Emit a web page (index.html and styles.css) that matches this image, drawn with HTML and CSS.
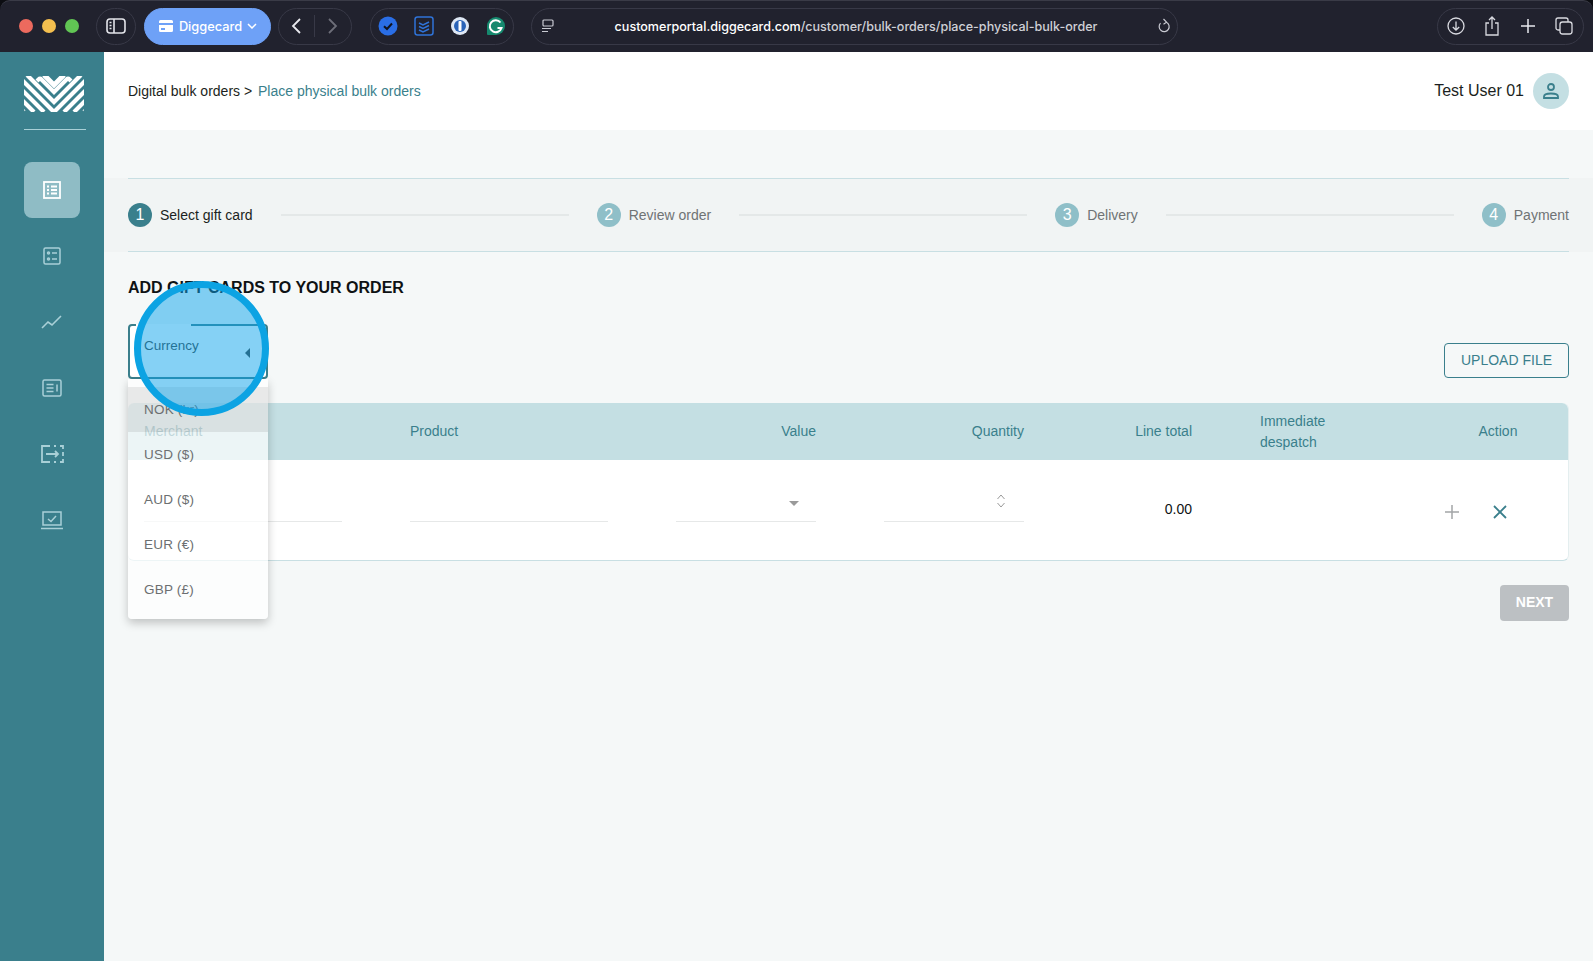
FILE: index.html
```html
<!DOCTYPE html>
<html lang="en">
<head>
    <meta charset="UTF-8">
    <title>Place physical bulk orders</title>
    <link rel="stylesheet" href="styles.css">
</head>
<body>
    <!-- Browser toolbar -->
    <div class="topbar">
        <div class="lights">
            <span class="light red"></span>
            <span class="light yellow"></span>
            <span class="light green"></span>
        </div>
        <div class="pill sidebar-btn">
            <svg width="22" height="18" viewBox="0 0 22 18" fill="none" stroke="#e4e5ea" stroke-width="1.6"><rect x="2" y="2" width="18" height="14" rx="3"/><path d="M9 2v14M4.5 5.5h2M4.5 8.5h2M4.5 11.5h2"/></svg>
        </div>
        <div class="pill tab-group">
            <svg width="16" height="14" viewBox="0 0 16 14" fill="#fff"><path d="M2.500 1h11A1.500 1.500 0 0 1 15 2.500V4H1V2.500A1.500 1.500 0 0 1 2.500 1zM1 6h14v5.500a1.500 1.500 0 0 1-1.500 1.500h-11A1.500 1.500 0 0 1 1 11.500z"/><rect x="3" y="9" width="4" height="2" fill="#6ea1f7"/></svg>
            <span>Diggecard</span>
            <svg width="10" height="6" viewBox="0 0 10 6" fill="none" stroke="#fff" stroke-width="1.500"><path d="M1 1l4 4 4-4"/></svg>
        </div>
        <div class="pill nav-group">
            <svg width="12" height="18" viewBox="0 0 12 18" fill="none" stroke="#e8e9ee" stroke-width="1.800"><path d="M10 2L3 9l7 7"/></svg>
            <span class="nav-sep"></span>
            <svg width="12" height="18" viewBox="0 0 12 18" fill="none" stroke="#6d6e79" stroke-width="1.800"><path d="M2 2l7 7-7 7"/></svg>
        </div>
        <div class="pill ext-group">
            <svg width="20" height="20" viewBox="0 0 20 20"><circle cx="10" cy="10" r="9.500" fill="#2a6ee6"/><path d="M6 10.200l3 2.800 5-5.500" fill="none" stroke="#10131f" stroke-width="2"/></svg>
            <svg width="20" height="20" viewBox="0 0 20 20" fill="none" stroke="#2f73d8" stroke-width="1.500"><rect x="1" y="1" width="18" height="18" rx="2.500"/><path d="M5 7l4 2 6-3M5 10.500l4 2 6-3M5 14l4 2 6-3"/></svg>
            <svg width="20" height="20" viewBox="0 0 20 20"><circle cx="10" cy="10" r="9" fill="#dfe8f5"/><circle cx="10" cy="10" r="6" fill="#2a63b8"/><rect x="8.500" y="5" width="3" height="10" rx="1" fill="#fff"/></svg>
            <svg width="20" height="20" viewBox="0 0 20 20"><path d="M10 1a9 9 0 1 1 0 18H2a1 1 0 0 1-1-1v-8a9 9 0 0 1 9-9z" fill="#15896e"/><path d="M14.500 6.500A6 6 0 1 0 15.500 12h-4" fill="none" stroke="#fff" stroke-width="2"/></svg>
        </div>
        <div class="pill url-bar">
            <svg width="14" height="14" viewBox="0 0 14 14" fill="none" stroke="#c9cad2" stroke-width="1.200"><rect x="2" y="1" width="10" height="6" rx="1"/><path d="M1 9.500h9M1 12.500h6"/></svg>
            <div class="url-text"><b>customerportal.diggecard.com</b>/customer/bulk-orders/place-physical-bulk-order</div>
            <svg width="14" height="16" viewBox="0 0 14 16" fill="none" stroke="#c9cad2" stroke-width="1.200"><path d="M9.500 4.200a5 5 0 1 1-6 1M6.500 1l3 3.200-3 2"/></svg>
        </div>
        <div class="pill right-group">
            <svg width="18" height="18" viewBox="0 0 18 18" fill="none" stroke="#d9dae0" stroke-width="1.300"><circle cx="9" cy="9" r="8"/><path d="M9 4.500v8.500M5.800 10L9 13l3.200-3"/></svg>
            <svg width="16" height="20" viewBox="0 0 16 20" fill="none" stroke="#d9dae0" stroke-width="1.300"><path d="M5 7H2v12h12V7h-3M8 13V1.500M5 4l3-3 3 3"/></svg>
            <svg width="16" height="16" viewBox="0 0 16 16" fill="none" stroke="#e8e9ee" stroke-width="1.500"><path d="M8 1v14M1 8h14"/></svg>
            <svg width="18" height="18" viewBox="0 0 18 18" fill="none" stroke="#d9dae0" stroke-width="1.300"><rect x="5" y="5" width="12" height="12" rx="2.500"/><path d="M5 13H3a2 2 0 0 1-2-2V3a2 2 0 0 1 2-2h8a2 2 0 0 1 2 2v2"/></svg>
        </div>
    </div>

    <div class="app">
        <!-- Sidebar -->
        <div class="sidebar">
            <svg class="logo" width="60" height="36" viewBox="0 0 60 36" fill="none" stroke="#fff" stroke-width="4.200">
                <defs><clipPath id="logo-clip"><rect width="60" height="36" rx="3"/></clipPath></defs>
                <g clip-path="url(#logo-clip)">
                    <path d="M20-1l10 10L40-1" stroke-width="5"/>
                    <path d="M13 5l1.500-1.500Q16 2 17.500 3.500L30 16 42.500 3.500Q44 2 45.500 3.500L47 5"/>
                    <path d="M3-1v0L30 26 57-1"/>
                    <path d="M-6 0L30 36 66 0"/>
                    <path d="M-6 10l26 26M66 10L40 36"/>
                    <path d="M-6 20L10 36M66 20L50 36"/>
                    <path d="M-6 30l6 6M66 30l-6 6"/>
                </g>
            </svg>
            <div class="side-divider"></div>
            <div class="side-item active">
                <svg width="20" height="20" viewBox="0 0 20 20" fill="none" stroke="#fff" stroke-width="1.800"><rect x="2" y="2" width="16" height="16"/><path d="M5 6.500h2M9 6.500h6M5 10h2M9 10h6M5 13.500h2M9 13.500h6"/></svg>
            </div>
            <div class="side-item">
                <svg width="20" height="20" viewBox="0 0 20 20" fill="none" stroke="#a9d0d7" stroke-width="1.500"><rect x="2" y="2" width="16" height="16" rx="1.500"/><path d="M10 7h5M10 13h5"/><circle cx="6.500" cy="7" r="1"/><circle cx="6.500" cy="13" r="1"/></svg>
            </div>
            <div class="side-item">
                <svg width="22" height="20" viewBox="0 0 22 20" fill="none" stroke="#a9d0d7" stroke-width="1.600"><path d="M1 16l6-6 4 3 9-9"/></svg>
            </div>
            <div class="side-item">
                <svg width="20" height="20" viewBox="0 0 20 20" fill="none" stroke="#a9d0d7" stroke-width="1.500"><rect x="1" y="2" width="18" height="16" rx="1.500"/><path d="M4.500 6.500h7M4.500 10h7M4.500 13.500h7M15 6.500v7"/></svg>
            </div>
            <div class="side-item">
                <svg width="24" height="20" viewBox="0 0 24 20" fill="none" stroke="#a9d0d7" stroke-width="1.800"><path d="M10 2H2v16h8M14 2h2M20 2h3v3M23 8v4M23 15v3h-3M14 18h2M6 10h12M15 7l3 3-3 3"/></svg>
            </div>
            <div class="side-item">
                <svg width="22" height="20" viewBox="0 0 22 20" fill="none" stroke="#a9d0d7" stroke-width="1.500"><rect x="2" y="2" width="18" height="13"/><path d="M7 9l3 2.500L15 6M0 18.500h22"/></svg>
            </div>
        </div>

        <div class="main">
            <div class="page-header">
                <div class="breadcrumb">Digital bulk orders &gt; <span class="crumb-link">Place physical bulk orders</span></div>
                <div class="user">
                    <span>Test User 01</span>
                    <div class="avatar">
                        <svg width="18" height="18" viewBox="0 0 18 18" fill="none" stroke="#3a7f8c" stroke-width="1.800"><circle cx="9" cy="5" r="3"/><path d="M2 16v-1.500c0-2 3-3 7-3s7 1 7 3V16z"/></svg>
                    </div>
                </div>
            </div>

            <div class="stepper-band">
                <div class="stepper">
                    <div class="step current"><span class="step-num">1</span>Select gift card</div>
                    <div class="step-line"></div>
                    <div class="step"><span class="step-num">2</span>Review order</div>
                    <div class="step-line"></div>
                    <div class="step"><span class="step-num">3</span>Delivery</div>
                    <div class="step-line"></div>
                    <div class="step"><span class="step-num">4</span>Payment</div>
                </div>
            </div>

            <div class="content">
                <h2 class="page-title">ADD GIFT CARDS TO YOUR ORDER</h2>

                <div class="toolbar">
                    <div class="currency-select">
                        <span class="notch"></span>
                        <span class="currency-label">Currency</span>
                        <span class="arrow-left"></span>
                        <div class="currency-menu">
                            <div class="menu-item selected">NOK (kr)</div>
                            <div class="menu-item">USD ($)</div>
                            <div class="menu-item">AUD ($)</div>
                            <div class="menu-item">EUR (€)</div>
                            <div class="menu-item">GBP (£)</div>
                        </div>
                        <div class="click-circle"></div>
                    </div>
                    <button class="upload-btn">UPLOAD FILE</button>
                </div>

                <div class="order-table">
                    <div class="table-grid table-head">
                        <div>Merchant</div>
                        <div>Product</div>
                        <div class="right">Value</div>
                        <div class="right">Quantity</div>
                        <div class="right">Line total</div>
                        <div>Immediate despatch</div>
                        <div class="center">Action</div>
                    </div>
                    <div class="table-grid table-row">
                        <div class="field"></div>
                        <div class="field"></div>
                        <div class="field">
                            <span class="arrow-down"></span>
                        </div>
                        <div class="field">
                            <svg width="10" height="16" viewBox="0 0 10 16" fill="none" stroke="#9a9a9a" stroke-width="1"><path d="M1.500 6L5 2l3.500 4M1.500 10L5 14l3.500-4"/></svg>
                        </div>
                        <div class="right line-total">0.00</div>
                        <div></div>
                        <div class="row-actions">
                            <svg width="16" height="16" viewBox="0 0 16 16" fill="none" stroke="#a3a5a7" stroke-width="1.500"><path d="M8 1v14M1 8h14"/></svg>
                            <svg width="16" height="16" viewBox="0 0 16 16" fill="none" stroke="#3a7f8c" stroke-width="1.800"><path d="M2 2l12 12M14 2L2 14"/></svg>
                        </div>
                    </div>
                </div>

                <div class="footer-actions">
                    <button class="next-btn">NEXT</button>
                </div>
            </div>
        </div>
    </div>
</body>
</html>
```

FILE: styles.css
```css
* {
    box-sizing: border-box;
}
html, body {
    height: 100%;
}
body {
    margin: 0;
    background-color: #0c0d12;
    font-family: 'Liberation Sans', Arial, sans-serif;
    font-size: 14px;
    color: #1b1f21;
    overflow: hidden;
    display: flex;
    flex-direction: column;
}

/* Browser toolbar */
.topbar {
    height: 52px;
    flex-shrink: 0;
    display: flex;
    align-items: center;
    padding: 0 9px 1px 19px;
    background-color: #21222e;
    border-top: 1px solid #3a3b47;
    border-radius: 10px 10px 0 0;
    font-family: 'Inter', sans-serif;
}
.lights {
    display: flex;
    gap: 9px;
    margin-right: 17px;
}
.light {
    width: 14px;
    height: 14px;
    border-radius: 50%;
}
.red { background-color: #ec6a5e; }
.yellow { background-color: #f4bf4f; }
.green { background-color: #61c554; }
.pill {
    height: 37px;
    border-radius: 19px;
    border: 1px solid #383947;
    display: flex;
    align-items: center;
}
.sidebar-btn {
    width: 40px;
    justify-content: center;
    margin-right: 8px;
}
.tab-group {
    width: 127px;
    justify-content: center;
    gap: 5px;
    margin-right: 7px;
    background-color: #6ea1f7;
    border-color: #6ea1f7;
    color: #fff;
    font-size: 12.800px;
    font-weight: 500;
}
.nav-group {
    width: 74px;
    justify-content: space-between;
    padding: 0 12px 0 11px;
    margin-right: 18px;
}
.nav-sep {
    width: 1px;
    height: 22px;
    background-color: #383947;
}
.ext-group {
    width: 144px;
    justify-content: space-between;
    padding: 0 7px;
    margin-right: 17px;
}
.url-bar {
    width: 647px;
    padding: 0 6px 0 9px;
    margin-right: auto;
    color: #cfd0d6;
}
.url-text {
    flex: 1;
    text-align: center;
    font-size: 12.550px;
    font-weight: 500;
    white-space: nowrap;
}
.url-text b {
    color: #fff;
    font-weight: 500;
}
.right-group {
    width: 147px;
    justify-content: space-between;
    padding: 0 10px 0 9px;
}

/* App shell */
.app {
    flex: 1;
    display: flex;
    min-height: 0;
    background-color: #f5f8f8;
}
.sidebar {
    width: 104px;
    flex-shrink: 0;
    background-color: #3a7f8c;
    padding: 24px 0 0 24px;
    display: flex;
    flex-direction: column;
    gap: 10px;
}
.logo {
    display: block;
}
.side-divider {
    width: 62px;
    height: 1px;
    margin: 7px 0 22px;
    background-color: #a9d0d7;
}
.side-item {
    width: 56px;
    height: 56px;
    display: flex;
    align-items: center;
    justify-content: center;
    border-radius: 8px;
}
.side-item.active {
    background-color: #8fbcc5;
}

.main {
    flex: 1;
    min-width: 0;
}
.page-header {
    height: 78px;
    background-color: #fff;
    padding: 0 24px;
    display: flex;
    align-items: center;
    justify-content: space-between;
}
.crumb-link {
    margin-left: 2px;
    color: #3a7f8c;
}
.user {
    display: flex;
    align-items: center;
    gap: 9px;
    font-size: 16px;
}
.avatar {
    width: 36px;
    height: 36px;
    border-radius: 50%;
    background-color: #c4dfe3;
    display: flex;
    align-items: center;
    justify-content: center;
}

/* Stepper */
.stepper-band {
    margin-top: 48px;
    padding-left: 24px;
    background-color: #f1f4f4;
}
.stepper {
    height: 74px;
    margin-right: 24px;
    display: flex;
    align-items: center;
    gap: 28px;
    border-top: 1px solid #c8dfe3;
    border-bottom: 1px solid #c8dfe3;
    color: #6f7375;
}
.step {
    display: flex;
    align-items: center;
    gap: 8px;
    white-space: nowrap;
}
.step.current {
    color: #1b1f21;
}
.step-num {
    width: 24px;
    height: 24px;
    border-radius: 50%;
    background-color: #8fbfc8;
    color: #fff;
    display: flex;
    align-items: center;
    justify-content: center;
    font-size: 16px;
}
.step.current .step-num {
    background-color: #3a7f8c;
}
.step-line {
    flex: 1;
    height: 2px;
    background-color: #e4e8e8;
}

/* Content */
.content {
    padding: 0 24px;
}
.page-title {
    margin: 26px 0 26px;
    font-size: 16px;
    line-height: 20px;
    font-weight: bold;
    color: #0e1214;
}
.toolbar {
    display: flex;
    justify-content: space-between;
    align-items: flex-end;
    margin-bottom: 24px;
}
.currency-select {
    position: relative;
    width: 140px;
    height: 55px;
    border: 2px solid #3a7f8c;
    border-radius: 4px;
    background-color: #fff;
    padding: 11px 14px;
    font-size: 13.500px;
    color: #3d3f3c;
}
.notch {
    position: absolute;
    top: -2px;
    left: 6px;
    width: 55px;
    height: 2px;
    background-color: #fff;
}
.currency-label {
    display: block;
    line-height: 18px;
}
.arrow-left {
    position: absolute;
    left: 115px;
    top: 22px;
    border-top: 5px solid transparent;
    border-bottom: 5px solid transparent;
    border-right: 5px solid #3d3f3c;
}
.currency-menu {
    position: absolute;
    z-index: 2;
    top: 53px;
    left: -2px;
    width: 140px;
    padding: 8px 0 7px;
    background-color: rgba(255, 255, 255, 0.68);
    border-radius: 0 0 4px 4px;
    box-shadow: 0 4px 10px rgba(0, 0, 0, 0.22);
}
.menu-item {
    height: 45px;
    padding: 15px 16px 0;
    line-height: 16px;
    letter-spacing: 0.2px;
    color: #6c6f71;
}
.menu-item.selected {
    background-color: rgba(0, 0, 0, 0.08);
}
.click-circle {
    position: absolute;
    z-index: 3;
    left: 4px;
    top: -45px;
    width: 135px;
    height: 135px;
    border-radius: 50%;
    border: 7px solid #0ca3e3;
    background-color: rgba(12, 163, 235, 0.5);
}
.upload-btn {
    width: 125px;
    height: 35px;
    margin-bottom: 1px;
    padding-bottom: 3px;
    background-color: transparent;
    border: 1px solid #3a7f8c;
    border-radius: 4px;
    color: #3a7f8c;
    font-family: inherit;
    font-size: 14px;
}

/* Table */
.order-table {
    background-color: #fff;
    border-radius: 6px;
    border-right: 1px solid #e4eeef;
    border-bottom: 1px solid #c8dfe3;
}
.table-grid {
    display: grid;
    grid-template-columns: 198px 198px 140px 140px 100px 120px 100px;
    column-gap: 68px;
    padding: 0 22px 0 16px;
}
.table-head {
    height: 57px;
    align-items: center;
    background-color: #c4dfe3;
    border-radius: 6px 6px 0 0;
    color: #3a7f8c;
    line-height: 21px;
}
.right {
    text-align: right;
}
.center {
    text-align: center;
}
.table-row {
    height: 100px;
}
.field {
    height: 32px;
    margin-top: 30px;
    border-bottom: 1px solid #e6e8e8;
    display: flex;
    justify-content: flex-end;
    align-items: flex-start;
    padding: 3px 18px 0 0;
}
.arrow-down {
    margin: 8px -1px 0 0;
    border-left: 5px solid transparent;
    border-right: 5px solid transparent;
    border-top: 5px solid #9a9a9a;
}
.line-total {
    margin-top: 41px;
    line-height: 16px;
    color: #0e1214;
}
.row-actions {
    display: flex;
    gap: 32px;
    margin: 44px 0 0 -4px;
    align-items: flex-start;
}
.footer-actions {
    display: flex;
    justify-content: flex-end;
    margin-top: 24px;
}
.next-btn {
    width: 69px;
    height: 36px;
    padding-bottom: 3px;
    border: none;
    border-radius: 4px;
    background-color: #bcc0c3;
    color: #fff;
    font-family: inherit;
    font-size: 14px;
    font-weight: bold;
}
```
